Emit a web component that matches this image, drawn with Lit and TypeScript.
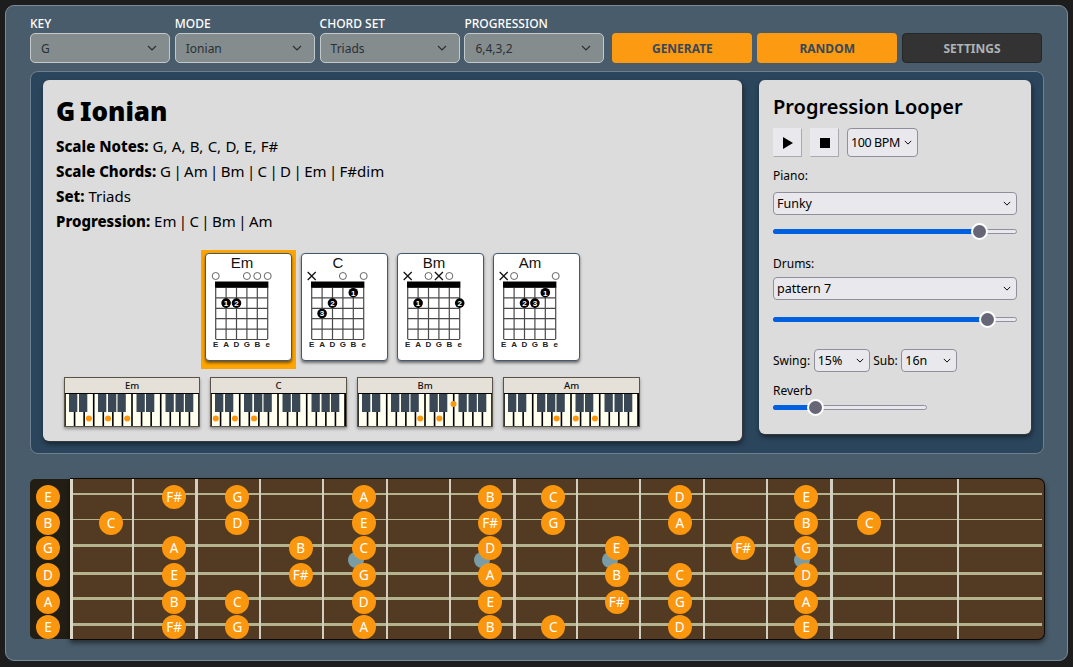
import { LitElement, html, css, svg } from 'lit'
import { customElement } from 'lit/decorators.js'

type Chord = { name: string; mute: number[]; open: number[]; dots: [number, number, number][] }

const CHORDS: Chord[] = [
  { name: 'Em', mute: [], open: [0, 3, 4, 5], dots: [[1, 2, 1], [2, 2, 2]] },
  { name: 'C', mute: [0], open: [3, 5], dots: [[4, 1, 1], [2, 2, 2], [1, 3, 3]] },
  { name: 'Bm', mute: [0, 3], open: [2, 4], dots: [[1, 2, 1], [5, 2, 2]] },
  { name: 'Am', mute: [0], open: [1, 5], dots: [[4, 1, 1], [2, 2, 2], [3, 2, 3]] },
]

// white key index for a naturals, black keys given as x offset
const PIANOS = [
  { name: 'Em', white: [2, 4, 6], black: [] as number[] },
  { name: 'C', white: [0, 2, 4], black: [] as number[] },
  { name: 'Bm', white: [6, 8], black: [92.5] },
  { name: 'Am', white: [5, 7, 9], black: [] as number[] },
]
const BLACK_KEYS = [5, 15, 34, 44, 53.5, 72.5, 82, 101.5, 111.5, 121]

const STRING_ROWS = [
  { y: 15, h: 2, c: 17, notes: 'E,2:F#,3:G,5:A,7:B,8:C,10:D,12:E' },
  { y: 41, h: 1, c: 43, notes: 'B,1:C,3:D,5:E,7:F#,8:G,10:A,12:B,13:C' },
  { y: 66, h: 3, c: 68, notes: 'G,2:A,4:B,5:C,7:D,9:E,11:F#,12:G' },
  { y: 94, h: 3, c: 95, notes: 'D,2:E,4:F#,5:G,7:A,9:B,10:C,12:D' },
  { y: 119, h: 3, c: 122, notes: 'A,2:B,3:C,5:D,7:E,9:F#,10:G,12:A' },
  { y: 145, h: 3, c: 147, notes: 'E,2:F#,3:G,5:A,7:B,8:C,10:D,12:E' },
]

const FRETS = Array.from({ length: 14 }, (_, i) => 103.2 + i * 63.43 - 1.2)
const THICK_FRETS = [1, 6, 11]
const INLAYS = [326, 452, 580, 772]

function noteX(fret: number) {
  return fret === 0 ? 18 : 81 + (fret - 1) * 63.2
}

@customElement('app-root')
export class AppRoot extends LitElement {
  static styles = css`
    :host {
      display: block;
      height: 667px;
      background: #1d1d1d;
      font-family: 'Noto Sans', sans-serif;
      overflow: hidden;
    }
    .panel {
      margin: 5px;
      height: 656px;
      box-sizing: border-box;
      background: #495c6b;
      border: 1px solid #7c8a95;
      border-radius: 9px;
      padding: 11px 24px 0;
    }
    .controls {
      display: flex;
      align-items: flex-end;
      gap: 8px;
    }
    .fields,
    .buttons {
      display: flex;
      gap: 4.8px;
    }
    .field {
      width: 140px;
    }
    .field label {
      display: block;
      height: 16px;
      line-height: 14px;
      font-size: 12px;
      font-weight: 500;
      color: #fff;
      text-transform: uppercase;
    }
    .top-select {
      box-sizing: border-box;
      height: 30px;
      padding: 0 10px;
      display: flex;
      align-items: center;
      justify-content: space-between;
      background: #848c8d;
      border: 1px solid #c3c8ca;
      border-radius: 5px;
      font-size: 12px;
      color: #2a3036;
    }
    .top-select svg {
      width: 10px;
      height: 6px;
      margin-right: 2px;
    }
    .btn {
      box-sizing: border-box;
      width: 140px;
      height: 30px;
      display: flex;
      align-items: center;
      justify-content: center;
      border-radius: 4px;
      font-size: 12px;
      font-weight: 700;
      background: #fc9a11;
      color: #36495b;
    }
    .btn.dark {
      background: #333;
      border: 1px solid #262626;
      color: #adb3b8;
    }
    .inner {
      box-sizing: border-box;
      width: 1014px;
      height: 383px;
      margin-top: 8px;
      padding: 8px 12px;
      display: flex;
      align-items: flex-start;
      gap: 17px;
      background: #2b455c;
      border: 1px solid #6f7f8b;
      border-radius: 8px;
    }
    .card {
      box-sizing: border-box;
      background: #dcdcdc;
      border-radius: 6px;
      box-shadow: 1px 1px 0 #33393e, 1px 3px 5px rgba(0, 0, 0, 0.5);
      color: #000;
    }
    .theory {
      width: 699px;
      height: 361px;
      padding: 13px 13px 0;
    }
    .theory h1 {
      margin: 0 0 4px;
      height: 37px;
      line-height: 37px;
      font-size: 26px;
      font-weight: 900;
      word-spacing: -2px;
    }
    .fact {
      height: 25px;
      line-height: 25px;
      font-size: 15px;
    }
    .fact b {
      font-weight: 800;
    }
    .commas {
      word-spacing: 0.4px;
    }
    .bars {
      word-spacing: -1.5px;
    }
    .chords {
      display: flex;
      justify-content: center;
      gap: 1px;
      margin-top: 16px;
    }
    .chord-wrap {
      padding: 3px 4px 8px;
    }
    .chord-wrap.active {
      background: #ffa500;
    }
    .chord {
      box-sizing: border-box;
      width: 87px;
      height: 108px;
      background: #fff;
      border: 1px solid #46586a;
      border-radius: 4px;
      box-shadow: 0 2px 3px rgba(0, 0, 0, 0.5);
    }
    .chord svg {
      display: block;
    }
    .pianos {
      display: flex;
      gap: 10.2px;
      margin: 8px 0 0 8px;
    }
    .piano {
      box-sizing: border-box;
      width: 136.3px;
      height: 50px;
      border: 1px solid #5b5345;
      background: #000;
      box-shadow: 0 2px 3px rgba(0, 0, 0, 0.35);
    }
    .piano-name {
      height: 15px;
      line-height: 15px;
      text-align: center;
      font-size: 9.5px;
      font-weight: 500;
      background: #e5e1d9;
      color: #111;
    }
    .piano svg {
      display: block;
      margin-top: 1px;
    }
    .looper {
      width: 272px;
      height: 354px;
      padding: 13px 14px 0;
      font-size: 12px;
    }
    .looper h2 {
      margin: 0 0 7px;
      height: 28px;
      line-height: 28px;
      font-size: 20px;
      font-weight: 600;
    }
    .transport {
      display: flex;
      gap: 8px;
    }
    .icon-btn {
      box-sizing: border-box;
      width: 29px;
      height: 29px;
      display: flex;
      align-items: center;
      justify-content: center;
      background: #e9e9ed;
      border: 1px solid #e9e9ed;
      border-right-color: #a9a9b2;
      border-bottom-color: #a9a9b2;
    }
    .select {
      box-sizing: border-box;
      height: 23px;
      padding: 0 3px;
      display: flex;
      align-items: center;
      justify-content: space-between;
      background: #e9e9ed;
      border: 1px solid #8f8f9d;
      border-radius: 4px;
      font-size: 12.5px;
      color: #000;
      white-space: nowrap;
    }
    .select svg {
      width: 8px;
      height: 5px;
      margin-right: 2px;
    }
    .bpm {
      width: 71px;
      height: 29px;
      letter-spacing: -0.4px;
    }
    .caption {
      height: 17px;
      line-height: 17px;
      font-size: 12px;
    }
    .slider {
      position: relative;
      box-sizing: border-box;
      height: 5px;
      background: #e9e9ed;
      border: 1px solid #8f8f9d;
      border-radius: 3px;
    }
    .fill {
      position: absolute;
      left: -1px;
      top: -1px;
      height: 5px;
      background: #0060df;
      border-radius: 3px;
    }
    .thumb {
      position: absolute;
      top: -7px;
      width: 17px;
      height: 17px;
      box-sizing: border-box;
      margin-left: -8.5px;
      border-radius: 50%;
      background: #666677;
      border: 2px solid #fff;
    }
    .swing {
      display: flex;
      align-items: center;
      gap: 3.5px;
      margin-top: 27px;
      font-size: 12px;
    }
    .swing .select {
      width: 56px;
    }
    .fretboard {
      position: relative;
      display: flex;
      width: 1015px;
      height: 162px;
      margin-top: 24px;
    }
    .head {
      width: 40px;
      height: 160px;
      margin-top: 1px;
      background: #231e14;
      border-radius: 5px 0 0 5px;
    }
    .neck {
      position: relative;
      flex: 1;
      box-sizing: border-box;
      background: #523b22;
      border: 1px solid #0b0805;
      border-left: 0;
      border-radius: 0 7px 7px 0;
      box-shadow: 0 3px 5px rgba(0, 0, 0, 0.5);
    }
    .fret {
      position: absolute;
      top: 0;
      bottom: 0;
      width: 2px;
      background: #d3cfc0;
    }
    .fret.thick {
      width: 3px;
    }
    .nut {
      position: absolute;
      left: 0;
      top: 0;
      bottom: 0;
      width: 3px;
      background: #dcd8c6;
    }
    .string {
      position: absolute;
      left: 0;
      right: 2px;
      background: #b5b38e;
    }
    .inlay {
      position: absolute;
      top: 73px;
      width: 16px;
      height: 16px;
      margin-left: -8px;
      border-radius: 50%;
      background: #7a9ca6;
    }
    .note {
      position: absolute;
      width: 24px;
      height: 24px;
      margin: -12px 0 0 -12px;
      border-radius: 50%;
      background: #fb970e;
      color: #fff;
      font-size: 13.5px;
      line-height: 24px;
      text-align: center;
    }
  `

  private chevron() {
    return html`<svg viewBox="0 0 10 6"><path d="M1 1l4 4 4-4" fill="none" stroke="currentColor" stroke-width="1.2" /></svg>`
  }

  private slider(width: number, at: number) {
    return html`<div class="slider" style="width:${width}px">
      <div class="fill" style="width:${at}px"></div>
      <div class="thumb" style="left:${at}px"></div>
    </div>`
  }

  private chordDiagram(c: Chord) {
    const x0 = 9.7
    const step = 10.4
    const strings = [0, 1, 2, 3, 4, 5]
    const frets = [0, 1, 2, 3, 4, 5]
    return html`<svg width="85" height="106" viewBox="0 0 85 106" font-family="Liberation Sans, sans-serif">
      <text x="36" y="14" font-size="15" text-anchor="middle" fill="#111">${c.name}</text>
      ${strings.map((s) => svg`<line x1=${x0 + s * step} x2=${x0 + s * step} y1="33" y2="85" stroke="#4a4a4a" stroke-width="1.2" />`)}
      ${frets.map((f) => svg`<line x1=${x0} x2=${x0 + 5 * step} y1=${33.5 + f * step} y2=${33.5 + f * step} stroke="#4a4a4a" stroke-width="1.2" />`)}
      <rect x=${x0 - 0.7} y="27.5" width="53.4" height="6" fill="#000" />
      ${c.open.map((s) => svg`<circle cx=${x0 + s * step} cy="22" r="3.5" fill="#fff" stroke="#555" stroke-width="0.9" />`)}
      ${c.mute.map((s) => {
        const x = x0 + s * step
        return svg`<path d="M${x - 4} 18l8 8m0-8l-8 8" stroke="#111" stroke-width="1.3" fill="none" />`
      })}
      ${c.dots.map(([s, fret, n]) => {
        const x = x0 + s * step
        const y = 33.5 + (fret - 0.5) * step
        return svg`<circle cx=${x} cy=${y} r="4.8" fill="#000" />
          <text x=${x} y=${y + 2.8} font-size="8" font-weight="700" text-anchor="middle" fill="#fff">${n}</text>`
      })}
      ${['E', 'A', 'D', 'G', 'B', 'e'].map(
        (l, s) => svg`<text x=${x0 + s * step} y="93" font-size="8" font-weight="700" text-anchor="middle" fill="#222">${l}</text>`,
      )}
    </svg>`
  }

  private pianoKeys(p: (typeof PIANOS)[number]) {
    const w = 134 / 14
    return html`<svg width="134" height="32" viewBox="0 0 134 32">
      <rect width="134" height="32" fill="#fffff0" />
      ${Array.from({ length: 15 }, (_, i) => svg`<rect x=${i * w - 0.8} y="0" width="1.6" height="32" fill="#000" />`)}
      ${BLACK_KEYS.map((x) => svg`<rect x=${x - 1} y="0" width="8.3" height="18" fill="#3a4856" />`)}
      ${p.white.map((k) => svg`<circle cx=${(k + 0.5) * w} cy="24.5" r="3" fill="#fb970e" />`)}
      ${p.black.map((x) => svg`<circle cx=${x + 3} cy="10" r="3" fill="#fb970e" />`)}
    </svg>`
  }

  private fretboard() {
    return html`<div class="fretboard">
      <div class="head"></div>
      <div class="neck">
        ${STRING_ROWS.map((r) => html`<div class="string" style="top:${r.y - 1}px;height:${r.h}px"></div>`)}
        <div class="nut"></div>
        ${FRETS.map((x, i) => html`<div class="fret ${THICK_FRETS.includes(i) ? 'thick' : ''}" style="left:${x - 40}px"></div>`)}
        ${INLAYS.map((x) => html`<div class="inlay" style="left:${x - 40}px"></div>`)}
      </div>
      ${STRING_ROWS.map((r) =>
        r.notes.split(',').map((n) => {
          const [fret, name] = n.includes(':') ? n.split(':') : ['0', n]
          return html`<div class="note" style="left:${noteX(Number(fret))}px;top:${r.c + 2}px">${name}</div>`
        }),
      )}
    </div>`
  }

  render() {
    const fields = [
      ['Key', 'G'],
      ['Mode', 'Ionian'],
      ['Chord Set', 'Triads'],
      ['Progression', '6,4,3,2'],
    ]
    return html`<div class="panel">
      <div class="controls">
        <div class="fields">
          ${fields.map(
            ([label, value]) => html`<div class="field">
              <label>${label}</label>
              <div class="top-select"><span>${value}</span>${this.chevron()}</div>
            </div>`,
          )}
        </div>
        <div class="buttons">
          <div class="btn">GENERATE</div>
          <div class="btn">RANDOM</div>
          <div class="btn dark">SETTINGS</div>
        </div>
      </div>

      <div class="inner">
        <div class="card theory">
          <h1>G Ionian</h1>
          <div class="fact"><b>Scale Notes:</b> <span class="commas">G, A, B, C, D, E, F#</span></div>
          <div class="fact"><b>Scale Chords:</b> <span class="bars">G | Am | Bm | C | D | Em | F#dim</span></div>
          <div class="fact"><b>Set:</b> Triads</div>
          <div class="fact"><b>Progression:</b> <span class="bars">Em | C | Bm | Am</span></div>
          <div class="chords">
            ${CHORDS.map(
              (c, i) => html`<div class="chord-wrap ${i === 0 ? 'active' : ''}">
                <div class="chord">${this.chordDiagram(c)}</div>
              </div>`,
            )}
          </div>
          <div class="pianos">
            ${PIANOS.map(
              (p) => html`<div class="piano">
                <div class="piano-name">${p.name}</div>
                ${this.pianoKeys(p)}
              </div>`,
            )}
          </div>
        </div>

        <div class="card looper">
          <h2>Progression Looper</h2>
          <div class="transport">
            <div class="icon-btn">
              <svg width="10" height="12" viewBox="0 0 10 12"><path d="M0 0l10 6-10 6z" fill="#000" /></svg>
            </div>
            <div class="icon-btn">
              <svg width="10" height="10" viewBox="0 0 10 10"><rect width="10" height="10" fill="#000" /></svg>
            </div>
            <div class="select bpm"><span>100 BPM</span>${this.chevron()}</div>
          </div>
          <div class="caption" style="margin-top:10px">Piano:</div>
          <div class="select" style="margin-top:8px"><span>Funky</span>${this.chevron()}</div>
          <div style="margin-top:14px">${this.slider(244, 205)}</div>
          <div class="caption" style="margin-top:21px">Drums:</div>
          <div class="select" style="margin-top:5px"><span>pattern 7</span>${this.chevron()}</div>
          <div style="margin-top:17px">${this.slider(244, 213)}</div>
          <div class="swing">
            <span>Swing:</span>
            <div class="select"><span>15%</span>${this.chevron()}</div>
            <span>Sub:</span>
            <div class="select"><span>16n</span>${this.chevron()}</div>
          </div>
          <div class="caption" style="margin-top:10px">Reverb</div>
          <div style="margin-top:6px">${this.slider(154, 41)}</div>
        </div>
      </div>

      ${this.fretboard()}
    </div>`
  }
}
